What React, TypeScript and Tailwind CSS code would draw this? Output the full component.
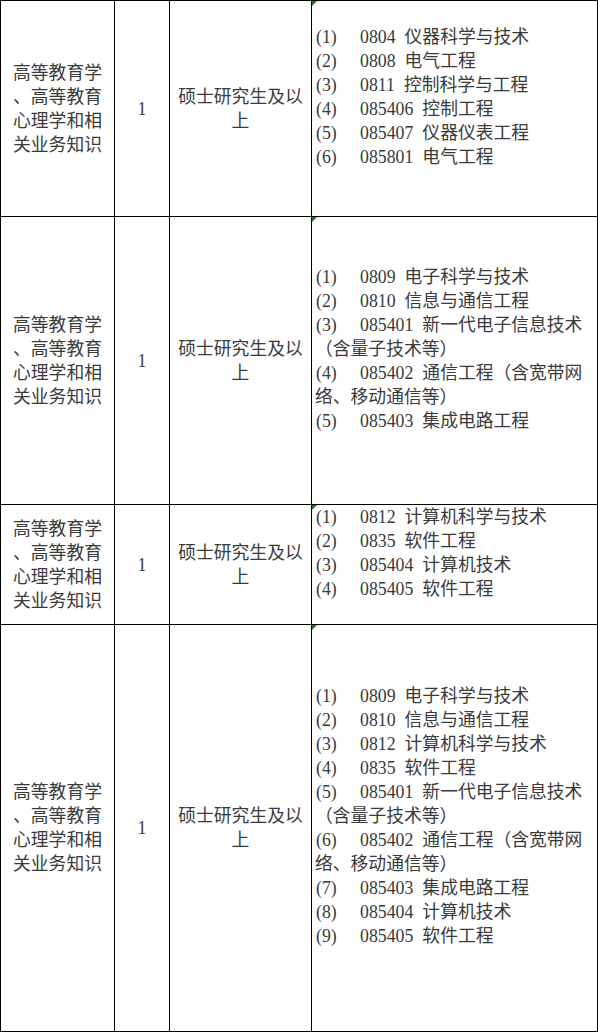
import React from "react";

type Line = { label?: string; code?: string; name?: string; text?: string };

const rows: { items: Line[] }[] = [
  {
    items: [
      { label: "(1)", code: "0804", name: "仪器科学与技术" },
      { label: "(2)", code: "0808", name: "电气工程" },
      { label: "(3)", code: "0811", name: "控制科学与工程" },
      { label: "(4)", code: "085406", name: "控制工程" },
      { label: "(5)", code: "085407", name: "仪器仪表工程" },
      { label: "(6)", code: "085801", name: "电气工程" },
    ],
  },
  {
    items: [
      { label: "(1)", code: "0809", name: "电子科学与技术" },
      { label: "(2)", code: "0810", name: "信息与通信工程" },
      { label: "(3)", code: "085401", name: "新一代电子信息技术" },
      { text: "（含量子技术等）" },
      { label: "(4)", code: "085402", name: "通信工程（含宽带网" },
      { text: "络、移动通信等）" },
      { label: "(5)", code: "085403", name: "集成电路工程" },
    ],
  },
  {
    items: [
      { label: "(1)", code: "0812", name: "计算机科学与技术" },
      { label: "(2)", code: "0835", name: "软件工程" },
      { label: "(3)", code: "085404", name: "计算机技术" },
      { label: "(4)", code: "085405", name: "软件工程" },
    ],
  },
  {
    items: [
      { label: "(1)", code: "0809", name: "电子科学与技术" },
      { label: "(2)", code: "0810", name: "信息与通信工程" },
      { label: "(3)", code: "0812", name: "计算机科学与技术" },
      { label: "(4)", code: "0835", name: "软件工程" },
      { label: "(5)", code: "085401", name: "新一代电子信息技术" },
      { text: "（含量子技术等）" },
      { label: "(6)", code: "085402", name: "通信工程（含宽带网" },
      { text: "络、移动通信等）" },
      { label: "(7)", code: "085403", name: "集成电路工程" },
      { label: "(8)", code: "085404", name: "计算机技术" },
      { label: "(9)", code: "085405", name: "软件工程" },
    ],
  },
];

const cell = "border-r border-b border-black flex items-center";

function Subject() {
  return (
    <div className={`${cell} justify-center text-center`}>
      <div>
        高等教育学
        <br />
        、高等教育
        <br />
        心理学和相
        <br />
        关业务知识
      </div>
    </div>
  );
}

export default function App() {
  return (
    <div
      className="w-[598px] bg-white text-[#3a3a3a] text-[17.8px] leading-[24px]"
      style={{ fontFamily: "'Liberation Serif', 'Noto Sans CJK SC', serif" }}
    >
      <div className="grid grid-cols-[114px_55px_142px_286px] grid-rows-[216px_288px_120px_407px] border-l border-t border-black">
        {rows.map((r, i) => (
          <React.Fragment key={i}>
            <Subject />
            <div className={`${cell} justify-center`}>1</div>
            <div className={`${cell} justify-center text-center`}>
              <div>
                硕士研究生及以
                <br />上
              </div>
            </div>
            <div className={`${cell} relative pl-[3px]`}>
              <div className="absolute left-0 top-0 w-0 h-0 border-t-[5px] border-t-[#1f7a1f] border-r-[5px] border-r-transparent" />
              <div>
                {r.items.map((it, j) =>
                  it.text ? (
                    <div key={j} className="whitespace-nowrap">
                      {it.text}
                    </div>
                  ) : (
                    <div key={j} className="whitespace-nowrap flex">
                      <span className="inline-block w-[45px] pl-[1px]">{it.label}</span>
                      <span>{it.code}</span>
                      <span className="pl-[9px]">{it.name}</span>
                    </div>
                  )
                )}
                <div className="h-[24px]" />
              </div>
            </div>
          </React.Fragment>
        ))}
      </div>
    </div>
  );
}
